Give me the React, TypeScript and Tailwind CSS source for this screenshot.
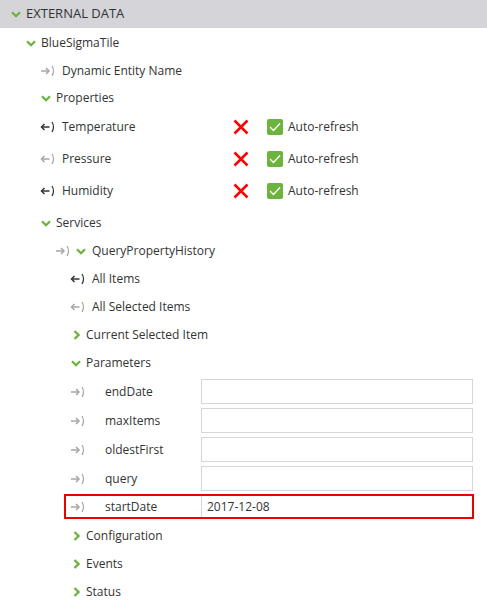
import React from 'react';

const GREEN = '#6db33f';

function ChevronDown() {
  return (
    <svg width="10" height="7" viewBox="0 0 10 7" className="shrink-0">
      <path d="M1 1.2 L5 5.2 L9 1.2" fill="none" stroke={GREEN} strokeWidth="2.3" />
    </svg>
  );
}

function ChevronRight() {
  return (
    <svg width="7" height="10" viewBox="0 0 7 10" className="shrink-0">
      <path d="M1.5 1 L5.5 5 L1.5 9" fill="none" stroke={GREEN} strokeWidth="2.3" />
    </svg>
  );
}

// arrow + bracket glyph used for bindings
function Binding({ dir, dark }: { dir: 'in' | 'out'; dark?: boolean }) {
  const c = dark ? '#333333' : '#a6a6a6';
  return (
    <svg width="16" height="12" viewBox="0 0 16 12" className="shrink-0">
      {dir === 'in' ? (
        <>
          <path d="M1 6 H9" stroke={c} strokeWidth="1.5" />
          <path d="M6 3 L9 6 L6 9" fill="none" stroke={c} strokeWidth="1.5" />
        </>
      ) : (
        <>
          <path d="M1.5 6 H9.5" stroke={c} strokeWidth="1.5" />
          <path d="M4.5 3 L1.5 6 L4.5 9" fill="none" stroke={c} strokeWidth="1.5" />
        </>
      )}
      <path d="M12 1 Q15 6 12 11" fill="none" stroke={c} strokeWidth="1.2" />
    </svg>
  );
}

function RedX() {
  return (
    <svg width="16" height="16" viewBox="0 0 16 16" className="shrink-0">
      <path d="M1.5 1.5 L14.5 14.5 M14.5 1.5 L1.5 14.5" stroke="#ff0000" strokeWidth="2.5" />
    </svg>
  );
}

function CheckBox() {
  return (
    <div className="w-[16px] h-[16px] rounded-[2px] bg-[#6db33f] flex items-center justify-center shrink-0">
      <svg width="12" height="10" viewBox="0 0 12 10">
        <path d="M1 5 L4.5 8.5 L11 1.5" fill="none" stroke="#fff" strokeWidth="1.4" />
      </svg>
    </div>
  );
}

function PropertyRow({ name, dark }: { name: string; dark?: boolean }) {
  return (
    <div className="h-[32px] flex items-center pl-[40px]">
      <Binding dir="out" dark={dark} />
      <span className="ml-[6px] w-[171px]">{name}</span>
      <RedX />
      <div className="ml-[18px] flex items-center gap-[5px]">
        <CheckBox />
        <span>Auto-refresh</span>
      </div>
    </div>
  );
}

function ParamRow({ name }: { name: string }) {
  return (
    <div className="h-[29px] flex items-center pl-[70px] pr-[14px]">
      <Binding dir="in" />
      <span className="ml-[19px] w-[96px]">{name}</span>
      <div className="flex-1 h-[25px] border border-[#d6d6d6] bg-white" />
    </div>
  );
}

function App() {
  const params = ['endDate', 'maxItems', 'oldestFirst', 'query'];

  return (
    <div
      className="w-[487px] h-[609px] bg-white text-[#333333] text-[12px] overflow-hidden"
      style={{ fontFamily: '"Segoe UI", "Open Sans", sans-serif' }}
    >
      <div className="h-[28px] bg-[#d4d4d9] flex items-center pl-[11px] gap-[5px]">
        <ChevronDown />
        <span className="text-[13px]">EXTERNAL DATA</span>
      </div>
      <div className="flex flex-col pt-[1px]">
        <div className="h-[28px] flex items-center pl-[26px] gap-[5px]">
          <ChevronDown />
          <span>BlueSigmaTile</span>
        </div>
        <div className="h-[28px] flex items-center pl-[40px] gap-[6px]">
          <Binding dir="in" />
          <span>Dynamic Entity Name</span>
        </div>
        <div className="h-[26px] flex items-center pl-[41px] gap-[5px]">
          <ChevronDown />
          <span>Properties</span>
        </div>
        <PropertyRow name="Temperature" dark />
        <PropertyRow name="Pressure" />
        <PropertyRow name="Humidity" dark />
        <div className="h-[28px] mt-[2px] flex items-center pl-[41px] gap-[5px]">
          <ChevronDown />
          <span>Services</span>
        </div>
        <div className="h-[28px] flex items-center pl-[55px]">
          <Binding dir="in" />
          <span className="ml-[5px]">
            <ChevronDown />
          </span>
          <span className="ml-[6px]">QueryPropertyHistory</span>
        </div>
        <div className="h-[28px] flex items-center pl-[70px] gap-[6px]">
          <Binding dir="out" dark />
          <span>All Items</span>
        </div>
        <div className="h-[28px] flex items-center pl-[70px] gap-[6px]">
          <Binding dir="out" />
          <span>All Selected Items</span>
        </div>
        <div className="h-[28px] flex items-center pl-[73px] gap-[6px]">
          <ChevronRight />
          <span>Current Selected Item</span>
        </div>
        <div className="h-[28px] flex items-center pl-[71px] gap-[5px]">
          <ChevronDown />
          <span>Parameters</span>
        </div>
        {params.map((p) => (
          <ParamRow key={p} name={p} />
        ))}
        <div className="mt-[1px] ml-[64px] mr-[13px] h-[25px] border-2 border-[#ee0000] flex items-center pl-[4px]">
          <Binding dir="in" />
          <span className="ml-[19px] w-[96px]">startDate</span>
          <div className="flex-1 h-full border-l border-[#d6d6d6] flex items-center pl-[5px]">
            2017-12-08
          </div>
        </div>
        {['Configuration', 'Events', 'Status'].map((s, i) => (
          <div
            key={s}
            className={
              i === 0
                ? 'h-[28px] mt-[3px] flex items-center pl-[73px] gap-[6px]'
                : 'h-[28px] flex items-center pl-[73px] gap-[6px]'
            }
          >
            <ChevronRight />
            <span>{s}</span>
          </div>
        ))}
      </div>
    </div>
  );
}

export default App;
